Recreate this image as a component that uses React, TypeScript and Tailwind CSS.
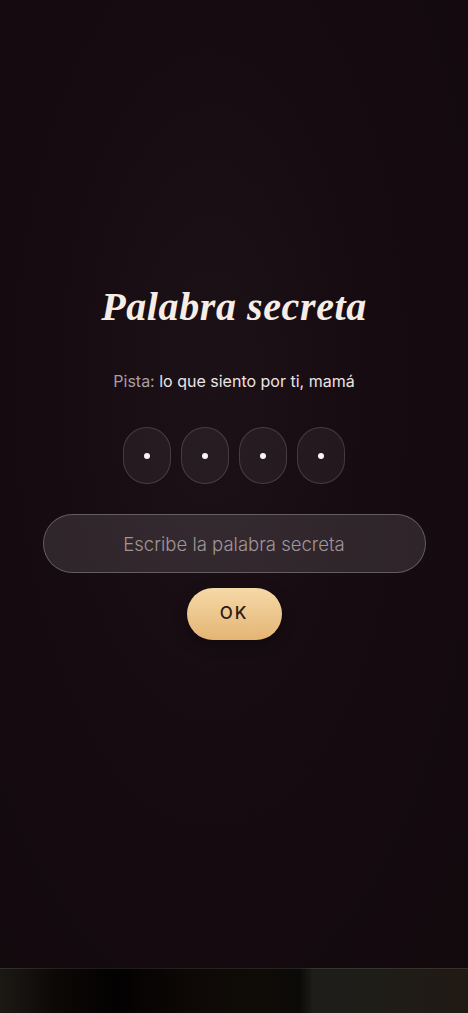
import React from 'react';

const App = () => {
  return (
    <div className="w-full h-[1013px] flex flex-col bg-[#120a0e] overflow-hidden">
      {/* Pantalla principal */}
      <div className="h-[968px] flex flex-col items-center bg-[radial-gradient(ellipse_at_45%_40%,#1c1117_0%,#160b11_45%,#12090d_100%)]">
        <h1
          className="mt-[284px] text-[40px] leading-[46px] font-bold italic text-[#f6ede6] tracking-[0.6px]"
          style={{ fontFamily: '"Liberation Serif", "DejaVu Serif", serif' }}
        >
          Palabra secreta
        </h1>

        <p
          className="mt-[40px] text-[16px] leading-[22px] text-[#ece4e4]"
          style={{ fontFamily: 'Inter, "Noto Sans", sans-serif' }}
        >
          <span className="text-[#a89ea2]">Pista: </span>lo que siento por ti, mamá
        </p>

        {/* Código */}
        <div className="mt-[35px] flex gap-[10px]">
          {[0, 1, 2, 3].map((i) => (
            <div
              key={i}
              className="w-[48px] h-[57px] rounded-[24px] border border-white/15 bg-white/[0.05] flex items-center justify-center"
            >
              <div className="w-[6px] h-[6px] rounded-full bg-[#fbf5f2]" />
            </div>
          ))}
        </div>

        <input
          type="text"
          placeholder="Escribe la palabra secreta"
          className="mt-[30px] w-[383px] h-[59px] rounded-full border border-white/25 bg-white/[0.11] text-center text-[18.5px] font-light text-[#efe7e7] placeholder:text-[#a0969a] outline-none"
          style={{ fontFamily: 'Inter, "Noto Sans", sans-serif' }}
        />

        <button
          className="mt-[15px] w-[95px] h-[52px] rounded-full bg-gradient-to-b from-[#f6d9a8] to-[#e3b574] text-[#2b1a16] text-[17px] font-medium tracking-[2px] shadow-[0_4px_14px_rgba(0,0,0,0.35)]"
          style={{ fontFamily: 'Inter, "Noto Sans", sans-serif' }}
        >
          OK
        </button>
      </div>

      {/* Franja inferior */}
      <div className="h-[45px] border-t border-white/10 bg-[linear-gradient(90deg,#1c1915_0%,#0c0806_12%,#030101_25%,#0d0806_40%,#0f0c08_55%,#0c0a08_64%,#1e1d19_67%,#1f1d18_80%,#201914_100%)]" />
    </div>
  );
};

export default App;
